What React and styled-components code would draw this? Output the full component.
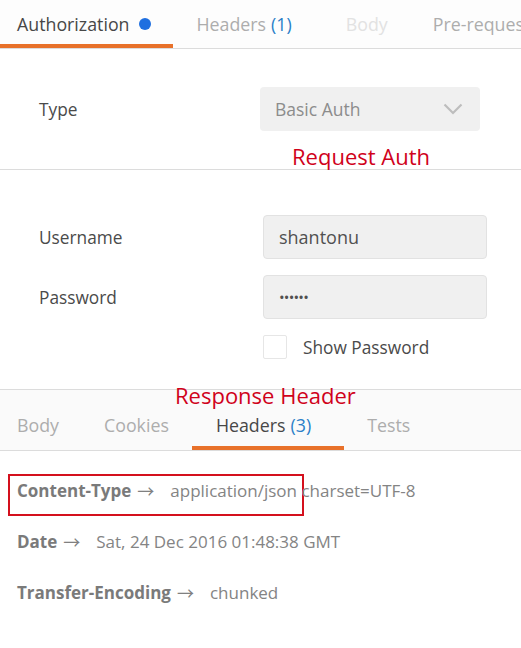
import React from 'react';
import styled, { createGlobalStyle } from 'styled-components';

const GlobalStyle = createGlobalStyle`
  html, body {
    margin: 0;
    padding: 0;
    background: #ffffff;
  }
  body {
    font-family: "Open Sans", "Liberation Sans", sans-serif;
    color: #505050;
    overflow: hidden;
  }
`;

const requestTabs = [
  { label: 'Authorization', active: true, dot: true, pad: '0 22px 0 17px' },
  { label: 'Headers', count: 1, pad: '0 27px 0 24px' },
  { label: 'Body', faint: true, pad: '0 22px 0 27px' },
  { label: 'Pre-request Script', pad: '0 22px 0 23px' },
];

const responseTabs = [
  { label: 'Body', pad: '0 22px 0 17px' },
  { label: 'Cookies', pad: '0 23px 0 23px' },
  { label: 'Headers', count: 3, active: true, pad: '0 33px 0 24px' },
  { label: 'Tests', pad: '0 23px 0 23px' },
];

const headers = [
  { key: 'Content-Type', value: 'application/json charset=UTF-8', boxed: true },
  { key: 'Date', value: 'Sat, 24 Dec 2016 01:48:38 GMT' },
  { key: 'Transfer-Encoding', value: 'chunked' },
];

function App() {
  return (
    <Page>
      <GlobalStyle />
      <TabBar>
        {requestTabs.map((tab) => (
          <Tab key={tab.label} active={tab.active} faint={tab.faint} pad={tab.pad}>
            {tab.label}
            {tab.count && <Count>({tab.count})</Count>}
            {tab.dot && <Dot />}
          </Tab>
        ))}
      </TabBar>

      <TypeSection>
        <FieldRow>
          <Label>Type</Label>
          <Select>
            Basic Auth
            <svg width="20" height="12" viewBox="0 0 20 12">
              <path d="M1.5 1.5 L10 10 L18.5 1.5" fill="none" stroke="#bdbdbd" strokeWidth="2.2" />
            </svg>
          </Select>
        </FieldRow>
        <Annotation indent="292px">Request Auth</Annotation>
      </TypeSection>

      <CredSection>
        <FieldRow>
          <Label>Username</Label>
          <Input>shantonu</Input>
        </FieldRow>
        <FieldRow>
          <Label>Password</Label>
          <Input dots>••••••</Input>
        </FieldRow>
        <CheckRow>
          <Checkbox />
          <CheckText>Show Password</CheckText>
        </CheckRow>
      </CredSection>

      <ResponseBar>
        <OverlayNote>Response Header</OverlayNote>
        <TabBar small>
          {responseTabs.map((tab) => (
            <Tab key={tab.label} active={tab.active} pad={tab.pad} small>
              {tab.label}
              {tab.count && <Count>({tab.count})</Count>}
            </Tab>
          ))}
        </TabBar>
      </ResponseBar>

      <HeaderList>
        {headers.map((h) => (
          <HeaderRow key={h.key} boxed={h.boxed}>
            <HeaderKey>{h.key}</HeaderKey>
            <Arrow>→</Arrow>
            <HeaderValue>{h.value}</HeaderValue>
          </HeaderRow>
        ))}
      </HeaderList>
    </Page>
  );
}

const Page = styled.div`
  width: 521px;
  height: 648px;
  overflow: hidden;
  background: #ffffff;
`;

const TabBar = styled.div`
  display: flex;
  height: ${(p) => (p.small ? '61px' : '49px')};
  border-bottom: 1px solid #dcdcdc;
  box-sizing: border-box;
  white-space: nowrap;
  overflow: hidden;
  background: ${(p) => (p.small ? 'transparent' : '#fdfdfd')};
`;

const Tab = styled.div`
  display: flex;
  align-items: ${(p) => (p.small ? 'flex-end' : 'center')};
  padding: ${(p) => p.pad};
  padding-bottom: ${(p) => (p.small ? '9px' : '0')};
  height: 100%;
  box-sizing: border-box;
  font-size: 17.8px;
  line-height: 24px;
  color: ${(p) => (p.active ? '#474747' : p.faint ? '#e2e2e2' : '#adadad')};
  border-bottom: 4px solid ${(p) => (p.active ? '#e8712a' : 'transparent')};
  border-top: ${(p) => (p.small ? '0' : '3px')} solid transparent;
  flex-shrink: 0;
`;

const Count = styled.span`
  color: #2a7fc8;
  margin-left: 5px;
`;

const Dot = styled.span`
  width: 12px;
  height: 12px;
  border-radius: 50%;
  background: #1f6fe0;
  margin-left: 9px;
`;

const TypeSection = styled.div`
  padding-top: 38px;
  height: 121px;
  box-sizing: border-box;
  border-bottom: 1px solid #dcdcdc;
`;

const FieldRow = styled.div`
  display: grid;
  grid-template-columns: 221px 220px;
  align-items: center;
  padding-left: 39px;
  margin-bottom: 16px;
`;

const Label = styled.div`
  font-size: 17.3px;
  color: #4a4a4a;
`;

const Select = styled.div`
  display: flex;
  align-items: center;
  justify-content: space-between;
  width: 220px;
  height: 44px;
  box-sizing: border-box;
  padding: 0 17px 0 15px;
  background: #f0f0f0;
  border-radius: 4px;
  font-size: 17.5px;
  color: #8c8c8c;
`;

const Annotation = styled.div`
  padding-left: ${(p) => p.indent};
  margin-top: -5px;
  font-size: 22px;
  line-height: 28px;
  color: #d0021b;
`;

const CredSection = styled.div`
  padding-top: 45px;
  height: 220px;
  box-sizing: border-box;
  border-bottom: 1px solid #dcdcdc;

  ${FieldRow} {
    grid-template-columns: 224px 224px;
  }
`;

const Input = styled.div`
  display: flex;
  align-items: center;
  height: 44px;
  box-sizing: border-box;
  padding-left: 15px;
  background: #f0f0f0;
  border: 1px solid #e2e2e2;
  border-radius: 4px;
  font-size: ${(p) => (p.dots ? '15px' : '18px')};
  letter-spacing: ${(p) => (p.dots ? '-0.8px' : '0')};
  color: #505050;
`;

const CheckRow = styled.div`
  display: flex;
  align-items: center;
  padding-left: 263px;
  margin-top: 1px;
`;

const Checkbox = styled.span`
  width: 22px;
  height: 22px;
  border: 1px solid #e6e6e6;
  border-radius: 2px;
  background: #ffffff;
`;

const CheckText = styled.span`
  font-size: 17.3px;
  color: #4a4a4a;
  margin-left: 16px;
`;

const ResponseBar = styled.div`
  position: relative;
  background: #fafafa;
`;

const OverlayNote = styled.div`
  position: absolute;
  top: -9px;
  left: 175px;
  font-size: 22px;
  line-height: 28px;
  color: #d0021b;
`;

const HeaderList = styled.div`
  padding: 23px 0 0 8px;
  display: flex;
  flex-direction: column;
  gap: 9px;
`;

const HeaderRow = styled.div`
  display: flex;
  align-items: center;
  height: 42px;
  padding: 0 0 10px 7px;
  box-sizing: border-box;
  width: ${(p) => (p.boxed ? '296px' : 'auto')};
  border: 2px solid ${(p) => (p.boxed ? '#d4101d' : 'transparent')};
  white-space: nowrap;
  font-size: 17px;
  color: #808080;
`;

const HeaderKey = styled.span`
  font-weight: 700;
  color: #7a7a7a;
`;

const Arrow = styled.span`
  font-family: "Noto Sans CJK JP", "DejaVu Sans", sans-serif;
  font-size: 17px;
  margin: 0 16px 0 6px;
  color: #808080;
`;

const HeaderValue = styled.span`
  color: #848484;
`;

export default App;
